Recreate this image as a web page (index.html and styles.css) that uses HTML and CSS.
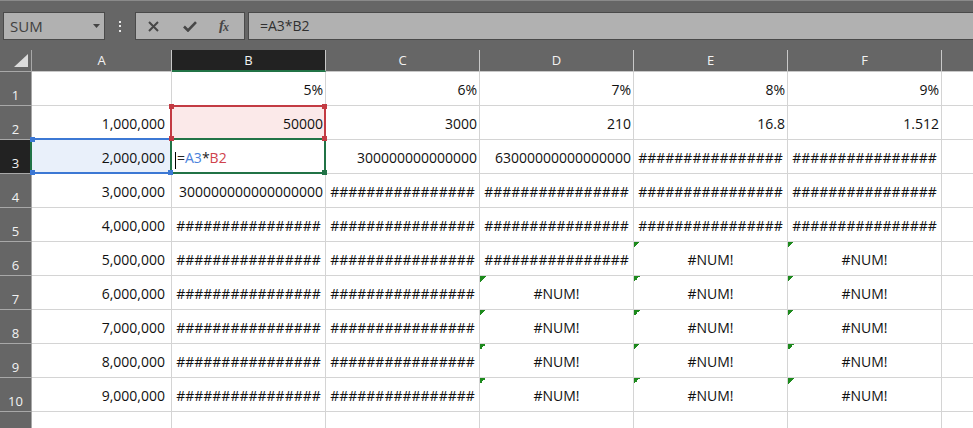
FILE: index.html
```html
<!DOCTYPE html>
<html>
<head>
<meta charset="utf-8">
<link rel="stylesheet" href="styles.css">
</head>
<body>
<div class="app">
  <div class="bar">
    <div class="namebox"><span class="nb-text">SUM</span><svg class="nb-arrow" width="7" height="4" viewBox="0 0 7 4"><polygon points="0,0 7,0 3.5,4" fill="#444"/></svg></div>
    <div class="dots"><i></i><i></i><i></i></div>
    <div class="btns">
      <svg class="ic-x" width="11" height="11" viewBox="0 0 11 11"><path d="M1 1 L10 10 M10 1 L1 10" stroke="#474747" stroke-width="2" fill="none"/></svg>
      <svg class="ic-check" width="14" height="11" viewBox="0 0 14 11"><path d="M1 5.5 L5 9.5 L13 1.2" stroke="#474747" stroke-width="2.6" fill="none"/></svg>
      <span class="fx">f<span class="fx-x">x</span></span>
    </div>
    <div class="fbox">=A3*B2</div>
  </div>
  <div class="sheet">
    <div class="corner"><svg width="31" height="21" viewBox="0 0 31 21"><polygon points="14,17 28,17 28,4" fill="#dcdcdc"/></svg></div>
    <div class="ch">A</div>
    <div class="ch sel">B</div>
    <div class="ch">C</div>
    <div class="ch">D</div>
    <div class="ch">E</div>
    <div class="ch">F</div>
    <div class="ch"></div>

    <div class="rh">1</div>
    <div class="c a"></div>
    <div class="c">5%</div>
    <div class="c">6%</div>
    <div class="c">7%</div>
    <div class="c">8%</div>
    <div class="c">9%</div>
    <div class="c g"></div>

    <div class="rh">2</div>
    <div class="c a">1,000,000</div>
    <div class="c ref-b2">50000<div class="sel-red"><i class="h tl"></i><i class="h tr"></i><i class="h bl"></i><i class="h br"></i></div></div>
    <div class="c">3000</div>
    <div class="c">210</div>
    <div class="c">16.8</div>
    <div class="c">1.512</div>
    <div class="c g"></div>

    <div class="rh cur">3</div>
    <div class="c a ref-a3">2,000,000<div class="sel-blue"><i class="h tl"></i><i class="h bl"></i><i class="h br"></i></div></div>
    <div class="c l edit"><span class="caret"></span><span class="op eq">=</span><span class="rb">A3</span><span class="op">*</span><span class="rr">B2</span><div class="sel-green"><i class="h br"></i></div></div>
    <div class="c">300000000000000</div>
    <div class="c">63000000000000000</div>
    <div class="c m">################</div>
    <div class="c m">################</div>
    <div class="c g"></div>

    <div class="rh">4</div>
    <div class="c a">3,000,000</div>
    <div class="c">300000000000000000</div>
    <div class="c m">################</div>
    <div class="c m">################</div>
    <div class="c m">################</div>
    <div class="c m">################</div>
    <div class="c g"></div>

    <div class="rh">5</div>
    <div class="c a">4,000,000</div>
    <div class="c m">################</div>
    <div class="c m">################</div>
    <div class="c m">################</div>
    <div class="c m">################</div>
    <div class="c m">################</div>
    <div class="c g"></div>

    <div class="rh">6</div>
    <div class="c a">5,000,000</div>
    <div class="c m">################</div>
    <div class="c m">################</div>
    <div class="c m">################</div>
    <div class="c m err">#NUM!</div>
    <div class="c m err">#NUM!</div>
    <div class="c g"></div>

    <div class="rh">7</div>
    <div class="c a">6,000,000</div>
    <div class="c m">################</div>
    <div class="c m">################</div>
    <div class="c m err">#NUM!</div>
    <div class="c m err">#NUM!</div>
    <div class="c m err">#NUM!</div>
    <div class="c g"></div>

    <div class="rh">8</div>
    <div class="c a">7,000,000</div>
    <div class="c m">################</div>
    <div class="c m">################</div>
    <div class="c m err">#NUM!</div>
    <div class="c m err">#NUM!</div>
    <div class="c m err">#NUM!</div>
    <div class="c g"></div>

    <div class="rh">9</div>
    <div class="c a">8,000,000</div>
    <div class="c m">################</div>
    <div class="c m">################</div>
    <div class="c m err">#NUM!</div>
    <div class="c m err">#NUM!</div>
    <div class="c m err">#NUM!</div>
    <div class="c g"></div>

    <div class="rh">10</div>
    <div class="c a">9,000,000</div>
    <div class="c m">################</div>
    <div class="c m">################</div>
    <div class="c m err">#NUM!</div>
    <div class="c m err">#NUM!</div>
    <div class="c m err">#NUM!</div>
    <div class="c g"></div>

    <div class="rh">11</div>
    <div class="c a"></div>
    <div class="c"></div>
    <div class="c"></div>
    <div class="c"></div>
    <div class="c"></div>
    <div class="c"></div>
    <div class="c g"></div>
  </div>
</div>
</body>
</html>
```
FILE: styles.css
```css
html, body {
  margin: 0;
  padding: 0;
  overflow: hidden;
  background: #fff;
}
.app {
  width: 973px;
  height: 428px;
  overflow: hidden;
  background: #666;
  border-top: 1px solid #8a8a8a;
  box-sizing: border-box;
  font-family: "Open Sans", sans-serif;
}
.bar {
  display: flex;
  height: 28px;
  margin: 11px 0 10px 0;
}
.namebox {
  margin-left: 3px;
  width: 102px;
  box-sizing: border-box;
  border: 1px solid #4a4a4a;
  background: #b1b1b1;
  display: flex;
  align-items: center;
  justify-content: space-between;
  padding: 0 4px 0 6px;
}
.nb-text {
  font-size: 15px;
  color: #404040;
  line-height: 20px;
}
.nb-arrow {
  display: block;
}
.dots {
  margin-left: 14px;
  width: 2px;
  display: flex;
  flex-direction: column;
  justify-content: center;
  gap: 2.5px;
}
.dots i {
  display: block;
  width: 2px;
  height: 2px;
  background: #e6e6e6;
}
.btns {
  margin-left: 14px;
  width: 110px;
  box-sizing: border-box;
  border: 1px solid #4a4a4a;
  background: #b1b1b1;
  display: flex;
  align-items: center;
}
.btns svg {
  display: block;
}
.ic-x {
  margin-left: 12px;
}
.ic-check {
  margin-left: 24px;
}
.fx {
  margin-left: 22px;
  font-family: "Liberation Serif", serif;
  font-style: italic;
  font-weight: bold;
  font-size: 15px;
  color: #474747;
  line-height: 16px;
  margin-top: -2px;
}
.fx-x {
  font-size: 12px;
  position: relative;
  top: 1px;
  margin-left: -1px;
}
.fbox {
  margin-left: 3px;
  flex: 1;
  margin-right: -4px;
  box-sizing: border-box;
  border: 1px solid #4a4a4a;
  background: #b1b1b1;
  color: #303030;
  font-size: 14px;
  line-height: 26px;
  padding-left: 11px;
}
.sheet {
  display: grid;
  grid-template-columns: 32px 140px repeat(5, 154px) 200px;
  grid-template-rows: 22px repeat(11, 34px);
}
.corner {
  background: #666;
  border-right: 1px solid #a8a8a8;
  border-bottom: 1px solid #a8a8a8;
  box-sizing: border-box;
}
.corner svg {
  display: block;
}
.ch {
  background: #666;
  color: #f2f2f2;
  font-size: 13px;
  line-height: 18px;
  box-sizing: border-box;
  border-right: 1px solid #c8c8c8;
  border-bottom: 1px solid #c8c8c8;
  display: flex;
  align-items: flex-end;
  justify-content: center;
  padding-bottom: 2px;
}
.ch.sel {
  background: #222;
  border-bottom: 2px solid #217346;
  padding-bottom: 1px;
}
.rh {
  background: #666;
  color: #f2f2f2;
  font-size: 13px;
  line-height: 18px;
  box-sizing: border-box;
  border-right: 1px solid #a8a8a8;
  border-bottom: 1px solid #a8a8a8;
  display: flex;
  align-items: flex-end;
  justify-content: center;
  padding-bottom: 1px;
}
.rh.cur {
  background: #222;
}
.c {
  position: relative;
  background: #fff;
  color: #111;
  font-size: 14px;
  line-height: 19px;
  box-sizing: border-box;
  border-right: 1px solid #d4d4d4;
  border-bottom: 1px solid #d4d4d4;
  display: flex;
  align-items: flex-end;
  justify-content: flex-end;
  padding: 0 2px 6px 3px;
  white-space: nowrap;
}
.c.a {
  padding-right: 6px;
}
.c.l {
  justify-content: flex-start;
}
.c.m {
  justify-content: center;
  padding-left: 0;
  padding-right: 0;
}
.c.err {
  background: linear-gradient(135deg, #1d8a1d 50%, transparent 50%) 0 0 / 6px 6px no-repeat, #fff;
}
.ref-b2 {
  background: #fbe9e9;
}
.ref-a3 {
  background: #e9f0fa;
}
.sel-red, .sel-blue, .sel-green {
  position: absolute;
  left: -2px;
  right: -1px;
  bottom: -1px;
}
.sel-red {
  top: -1px;
  box-shadow: inset 0 0 0 2px #c33b43;
}
.sel-blue {
  top: -2px;
  box-shadow: inset 0 -2px 0 0 #3c78d4, inset 0 2px 0 0 #3c78d4, inset 2px 0 0 0 #217346;
}
.sel-green {
  top: -2px;
  box-shadow: inset 0 0 0 2px #217346;
}
.h {
  position: absolute;
  width: 5px;
  height: 5px;
  z-index: 3;
}
.sel-red .h { background: #c33b43; }
.sel-blue .h { background: #3c78d4; }
.sel-green .h { background: #217346; }
.sel-red .h, .sel-blue .h { z-index: 4; }
.h.tl { left: -1px; top: -1px; }
.h.tr { right: -1px; top: -1px; }
.h.bl { left: -1px; bottom: -1px; }
.h.br { right: -1px; bottom: -1px; }
.sel-blue .h.tl, .sel-blue .h.bl { left: 0; }
.edit .caret {
  position: absolute;
  left: 3px;
  top: 12px;
  width: 1px;
  height: 17px;
  background: #000;
}
.edit .op {
  color: #222;
}
.edit .eq {
  margin-left: 2px;
}
.rb {
  color: #4a82dc;
}
.rr {
  color: #cf424c;
}
```
